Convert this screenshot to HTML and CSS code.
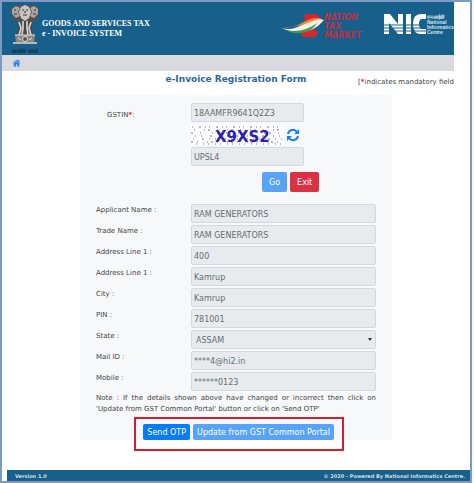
FILE: index.html
```html
<!DOCTYPE html>
<html lang="en">
<head>
    <meta charset="UTF-8">
    <meta name="viewport" content="width=device-width, initial-scale=1.0">
    <title>e-Invoice Registration Form</title>
    <link rel="stylesheet" href="styles.css">
</head>
<body>

<div class="page">
    <header class="header">
        <!-- State emblem -->
        <svg class="emblem" viewBox="0 0 30 50" aria-hidden="true">
            <path d="M4 2l5-2 4 2 4-2 4 2 5-1 3 5-2 4 1 4-5 4-2 5H10l-2-5-6-4 1-5-3-4z" fill="#55504c"/>
            <path d="M2 5l4-3 4 2-2 4 2 4-4 2-4-4zM28 5l-4-3-4 2 2 4-2 4 4 2 4-4z" fill="#aaa59f"/>
            <path d="M11 3l4-2 4 2 2 5-2 6-4 3-4-3-2-6z" fill="#c9c6c1"/>
            <path d="M12 6h2M16 6h2M13 11h4M4 6h2M24 6h2M4 10h3M23 10h3M15 7v2" stroke="#3a3634" stroke-width="1.2"/>
            <path d="M9 17h12l2 13-2 2H9l-2-2z" fill="#4a4542"/>
            <path d="M9 18l2 6-2 7M13 17v7l-1 7M17 17v7l1 7M21 18l-2 6 2 7" fill="none" stroke="#d6d3cf" stroke-width="1.7"/>
            <path d="M5 31h20l-1 7H6z" fill="#8d8883"/>
            <path d="M3 38h24v2H3z" fill="#bbb7b1"/>
            <circle cx="15" cy="35" r="2.5" fill="#55504c" stroke="#e3e1de"/>
            <path d="M8 34l3 2M19 36l3-2M5 31h20" stroke="#e3e1de"/>
            <text x="15" y="49" class="motto">सत्यमेव जयते</text>
        </svg>
        <div class="brand">GOODS AND SERVICES TAX<br>e - INVOICE SYSTEM</div>
        <div class="logos">
            <!-- Nation Tax Market -->
            <svg class="market-logo" viewBox="0 0 94 26" role="img" aria-label="Nation Tax Market">
                <path d="M24 1h11l4 3-2 6-6 4 6 6-3 4H22l-3-4 9-5 4-5h-9z" fill="#d62630"/>
                <path d="M0 15c10 3 17-1 25-5 7-4 12-5 18-3l-6 6c-9 7-22 8-37 2z" fill="#f5f1e4"/>
                <path d="M2 14c10 2 16-3 23-6 6-3 11-4 16-2-10 0-18 9-39 8z" fill="#f48731"/>
                <path d="M4 17c13 3 24-1 32-7-5 9-18 14-32 7z" fill="#3c9b4e"/>
                <g class="market-text">
                    <text x="43" y="7">NATION</text>
                    <text x="43" y="16">TAX</text>
                    <text x="43" y="25">MARKET</text>
                </g>
            </svg>
            <!-- NIC -->
            <svg class="nic-logo" viewBox="0 0 70 24" role="img" aria-label="National Informatics Centre">
                <path d="M0 1h6l8 10V1h5v20h-5L5 10v11H0zM22 1h5v20h-5zM42 1v5h-4q-3 0-3 5t3 5h4v5h-5q-8 0-8-10t8-10z" fill="#fff"/>
                <path d="M0 12h42M0 15h42M0 18h42" stroke="#17608b"/>
                <g class="nic-text">
                    <text x="43" y="6">एनआईसी</text>
                    <text x="43" y="11">National</text>
                    <text x="43" y="16">Informatics</text>
                    <text x="43" y="21">Centre</text>
                </g>
            </svg>
        </div>
    </header>

    <nav class="nav">
        <a href="#" aria-label="Home">
            <svg class="home" viewBox="0 0 16 14" aria-hidden="true">
                <path d="M8 1L1 7l1 1 6-5 6 5 1-1-2-2V1h-2v2z"/>
                <path d="M8 4l5 4v5H9V9H7v4H3V8z"/>
            </svg>
        </a>
    </nav>

    <div class="title-row">
        <h1>e-Invoice Registration Form</h1>
        <div class="mandatory">[<span class="star">*</span>indicates mandatory field</div>
    </div>

    <form class="panel">
        <div class="row">
            <label class="gstin" for="gstin">GSTIN<span class="star">*</span>:</label>
            <div class="lookup">
                <input type="text" id="gstin" value="18AAMFR9641Q2Z3" readonly>
                <div class="captcha">
                    <svg class="captcha-image" viewBox="0 0 93 21" role="img" aria-label="Captcha">
                        <g fill="none" stroke="#7165d8">
                            <path d="M1 3h93" stroke-dasharray="1 6 2 4 1 3"/>
                            <path d="M3 6h93" stroke-dasharray="1 9 1 3 2 7"/>
                            <path d="M0 9h93" stroke-dasharray="2 7 1 11 1 4"/>
                            <path d="M4 12h93" stroke-dasharray="1 5 1 8 2 9"/>
                            <path d="M2 15h93" stroke-dasharray="1 8 2 5 1 5"/>
                            <path d="M0 18h93" stroke-dasharray="2 4 1 9 1 3"/>
                            <path d="M5 20h88" stroke-dasharray="1 6 1 4"/>
                        </g>
                        <text x="24" y="18">X9XS2</text>
                    </svg>
                    <button type="button" class="refresh" aria-label="Refresh captcha">
                        <svg viewBox="0 0 14 14" aria-hidden="true">
                            <path d="M2 6a5 5 0 0 1 9-2M12 8a5 5 0 0 1-9 2" fill="none" stroke="#1b82e8" stroke-width="2"/>
                            <path d="M13 1v5H8zM1 13V8h5z" fill="#1b82e8"/>
                        </svg>
                    </button>
                </div>
                <input type="text" value="UPSL4" aria-label="Captcha code" readonly>
            </div>
        </div>

        <div class="actions">
            <button type="button" class="btn btn-light">Go</button>
            <button type="button" class="btn btn-danger">Exit</button>
        </div>

        <div class="details">
            <div class="row">
                <label for="applicant">Applicant Name :</label>
                <input type="text" id="applicant" value="RAM GENERATORS" readonly>
            </div>
            <div class="row">
                <label for="trade">Trade Name :</label>
                <input type="text" id="trade" value="RAM GENERATORS" readonly>
            </div>
            <div class="row">
                <label for="address1">Address Line 1 :</label>
                <input type="text" id="address1" value="400" readonly>
            </div>
            <div class="row">
                <label for="address2">Address Line 1 :</label>
                <input type="text" id="address2" value="Kamrup" readonly>
            </div>
            <div class="row">
                <label for="city">City :</label>
                <input type="text" id="city" value="Kamrup" readonly>
            </div>
            <div class="row">
                <label for="pin">PIN :</label>
                <input type="text" id="pin" value="781001" readonly>
            </div>
            <div class="row">
                <label for="state">State :</label>
                <div class="select">
                    <select id="state">
                        <option>ASSAM</option>
                    </select>
                </div>
            </div>
            <div class="row">
                <label for="mail">Mail ID :</label>
                <input type="text" id="mail" value="****4@hi2.in" readonly>
            </div>
            <div class="row">
                <label for="mobile">Mobile :</label>
                <input type="text" id="mobile" value="******0123" readonly>
            </div>
        </div>

        <p class="note">Note : If the details shown above have changed or incorrect then click on 'Update from GST Common Portal' button or click on 'Send OTP'</p>

        <div class="submit">
            <button type="button" class="btn btn-primary">Send OTP</button>
            <button type="button" class="btn btn-light">Update from GST Common Portal</button>
        </div>
    </form>

    <footer class="footer">
        <span>Version 1.0</span>
        <span>© 2020 - Powered By National Informatics Centre.</span>
    </footer>
</div>

</body>
</html>
```
FILE: styles.css
```css
* {
    box-sizing: border-box;
}
body {
    margin: 0;
    padding-right: 2px;
    background-color: #f4f8fd;
    font-family: Verdana, 'DejaVu Sans', sans-serif;
    font-size: 7px;
    color: #444;
}
.page {
    display: flex;
    flex-direction: column;
    min-height: 100vh;
    border: 2px solid #7d9bc2;
    background-color: #fff;
}

/* header */
.header {
    display: flex;
    height: 53px;
    margin-right: 16px;
    padding: 2px 0 0 8px;
    background-color: #17608b;
}
.emblem {
    width: 30px;
    height: 50px;
    overflow: visible;
}
.motto {
    font-size: 5px;
    font-weight: bold;
    text-anchor: middle;
    fill: #152d3d;
}
.brand {
    padding: 15px 0 0 2px;
    font-family: 'Liberation Serif', serif;
    font-size: 8px;
    font-weight: bold;
    line-height: 10px;
    white-space: nowrap;
    color: #fff;
}
.logos {
    display: flex;
    align-items: flex-start;
    gap: 9px;
    margin-left: auto;
    padding-top: 9px;
}
.market-logo {
    width: 94px;
    height: 26px;
}
.market-text {
    font-size: 8px;
    font-weight: bold;
    font-style: italic;
    fill: #bd3044;
}
.nic-logo {
    width: 70px;
    height: 24px;
}
.nic-text {
    font-family: 'Liberation Sans', Arial, sans-serif;
    font-size: 5px;
    font-weight: bold;
    fill: #d5e4ee;
}

.nav {
    height: 16px;
    margin-right: 16px;
    padding: 4px 10px;
    background-color: #d9dadf;
}
.home {
    display: block;
    width: 9px;
    height: 8px;
    fill: #2c80f0;
}

.title-row {
    display: grid;
    grid-template-columns: 1fr auto 1fr;
    height: 24px;
    line-height: 17px;
}
.title-row h1 {
    grid-column: 2;
    margin: 0;
    font-size: 9px;
    color: #2b68a0;
}
.mandatory {
    margin-right: 16px;
    padding-top: 3px;
    text-align: right;
    white-space: nowrap;
}
.star {
    font-weight: bold;
    color: #e02020;
}

/* form */
.panel {
    display: flex;
    flex-direction: column;
    width: 100%;
    max-width: 312px;
    margin: 0 auto;
    padding: 8px 16px 0;
    background-color: #f7f8fa;
}
.row {
    display: grid;
    grid-template-columns: 95px 1fr;
}
label {
    line-height: 12px;
}
.gstin {
    padding: 6px 0 0 11px;
}
input, select {
    display: block;
    width: 100%;
    height: 19px;
    margin: 0;
    padding: 1px 2px 0;
    border: 1px solid #d4d8dd;
    border-radius: 2px;
    background-color: #e8ebee;
    font-family: inherit;
    font-size: 8px;
    color: #666b70;
}
.lookup {
    width: 113px;
}
.captcha {
    display: flex;
    align-items: center;
    gap: 2px;
    height: 25px;
}
.captcha-image {
    width: 93px;
    height: 21px;
    background-color: #fff;
}
.captcha-image text {
    font-size: 15px;
    font-weight: bold;
    fill: #2c1fae;
}
.refresh {
    width: 14px;
    height: 14px;
    padding: 0;
    border: 0;
    background: none;
}
.refresh svg {
    display: block;
}
.btn {
    height: 16px;
    padding: 0 4px;
    border: 0;
    border-radius: 2px;
    font-family: inherit;
    font-size: 8px;
    white-space: nowrap;
    color: #fff;
}
.btn-primary {
    background-color: #087bf5;
}
.btn-light {
    background-color: #56a3f8;
}
.btn-danger {
    background-color: #dc3045;
}
.actions {
    display: flex;
    gap: 3px;
    margin: 6px 0 12px 166px;
}
.actions .btn {
    height: 20px;
    padding: 0 7px;
}
.details {
    display: grid;
    gap: 2px;
}
.select {
    position: relative;
}
.select::after {
    content: "";
    position: absolute;
    top: 8px;
    right: 4px;
    border: 2px solid transparent;
    border-top: 3px solid #333;
    border-bottom: 0;
}
select {
    appearance: none;
    padding: 1px 4px 0;
}
.note {
    margin: 2px 0 0;
    line-height: 11px;
    text-align: justify;
}
/* frame around the final step */
.submit {
    display: flex;
    align-self: flex-end;
    gap: 3px;
    margin: 2px 32px -11px 0;
    padding: 5px 8px 9px 7px;
    border: 2px solid #d02030;
}

.footer {
    display: flex;
    justify-content: space-between;
    height: 11px;
    margin: auto 0 0 5px;
    padding: 0 5px 0 8px;
    background-color: #17608b;
    font-size: 5px;
    font-weight: bold;
    line-height: 12px;
    color: #cfdfea;
}
```
